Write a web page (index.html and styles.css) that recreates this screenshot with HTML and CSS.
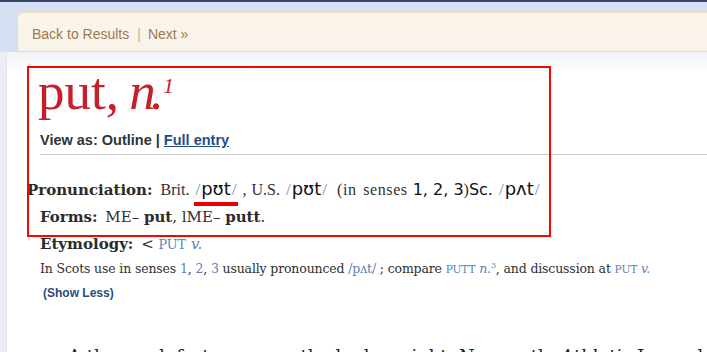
FILE: index.html
```html
<!DOCTYPE html>
<html lang="en">

<head>
    <meta charset="UTF-8">
    <title>put, n.1 — Oxford English Dictionary</title>
    <link rel="stylesheet" href="styles.css">
</head>

<body>
    <div class="top">
        <div class="crumbs">
            <a href="#">Back to Results</a><span class="sep">|</span><a href="#">Next »</a>
        </div>
    </div>
    <div class="page">
        <div class="entry">
            <h1 class="hw">put, <i>n.</i><sup>1</sup></h1>
            <div class="view">View as: Outline | <a href="#">Full entry</a></div>
            <hr class="rule">
            <p class="pron"><b>Pronunciation:</b> Brit. <span class="ipa marked"><span class="sl">/</span>pʊt<span class="sl">/</span></span> , U.S. <span class="ipa"><span class="sl">/</span>pʊt<span class="sl">/</span></span> <span class="wide">(in senses</span> <span class="sans">1, 2, 3</span>)<span class="sans">Sc.</span> <span class="ipa"><span class="sl">/</span>pʌt<span class="sl">/</span></span></p>
            <p class="line forms"><b>Forms:</b> ME– <b>put</b>, lME– <b>putt</b>.</p>
            <p class="line"><b>Etymology:</b> &lt; <span class="xref"><span class="sc">put</span> <i>v.</i></span></p>
            <p class="note">In Scots use in senses <span class="num">1</span>, <span class="num">2</span>, <span class="num">3</span> usually pronounced <span class="xipa">/pʌt/</span> ; compare <span class="xref"><span class="sc">putt</span> <i>n.</i><sup>3</sup></span>, and discussion at <span class="xref"><span class="sc">put</span> <i>v.</i></span></p>
            <a class="less" href="#">(Show Less)</a>
            <p class="quote">A thorough fortune upon the body weight. Newcastle <i>Athletic</i> Journal</p>
        </div>
        <div class="annot"></div>
    </div>
</body>

</html>
```

FILE: styles.css
```css
:root {
    --red: #c41f2b;
    --text: #2f2f2f;
    --link: #1f4d8a;
    --xref: #5d80b4;
    --brown: #9a7a4e;
}

body {
    margin: 0;
    background-color: #eceef4;
    color: var(--text);
    font-family: "DejaVu Serif", serif;
    height: 352px;
    overflow: hidden;
}

.top {
    border-top: 2px solid #34486c;
    background-color: #d7e0f3;
    padding: 10px 0 0 17px;
}

.crumbs {
    height: 40px;
    box-sizing: border-box;
    padding: 13px 0 0 14px;
    background: linear-gradient(#fdf4ea, #f8f3ea);
    border: 1px solid #efdcbd;
    border-right: none;
    border-bottom-color: #e2dacd;
    border-radius: 6px 0 0 0;
    font-family: "Liberation Sans", Arial, sans-serif;
    font-size: 14px;
}

.crumbs a {
    color: var(--brown);
    text-decoration: none;
}

.sep {
    color: #c9b08c;
    margin: 0 7px 0 8px;
}

.page {
    position: relative;
    margin-left: 6px;
    border-left: 1px solid #e1e4eb;
    background: linear-gradient(#f1f3f7, #ffffff 20px);
    height: 320px;
}

.entry {
    padding: 14px 0 0 33px;
}

.hw {
    margin: 0 0 0 -2px;
    font-family: "Liberation Serif", serif;
    font-weight: normal;
    font-size: 53px;
    line-height: 50px;
    color: var(--red);
    word-spacing: -3px;
}

.hw i {
    letter-spacing: -5px;
}

.hw sup {
    font-style: italic;
    font-size: 22px;
    vertical-align: 16px;
    line-height: 0;
    margin-left: 4px;
}

.view {
    margin-top: 16px;
    font-family: "Liberation Sans", Arial, sans-serif;
    font-weight: bold;
    font-size: 14.5px;
    line-height: 16px;
    color: #2f333a;
}

.view a {
    color: var(--link);
}

.rule {
    margin: 6px 0 0 0;
    border: none;
    border-top: 1px solid #cccccc;
}

.pron,
.line {
    margin: 0;
    font-size: 15px;
    line-height: 27px;
    height: 27px;
}

.pron b,
.line b {
    color: #2c2c2c;
}

.pron b:first-child,
.line b:first-child {
    margin-right: 3px;
}

.pron {
    margin: 20px 0 0 -13px;
    font-family: "Liberation Serif", serif;
    font-size: 16px;
    word-spacing: 1px;
}

.wide {
    letter-spacing: 0.6px;
    word-spacing: 2px;
    margin-left: 4px;
}

.forms {
    margin-top: 2px;
}

.pron b {
    font-family: "DejaVu Serif", serif;
    font-size: 15px;
    word-spacing: 0;
}

.ipa {
    position: relative;
    font-family: "DejaVu Sans", sans-serif;
    font-size: 18px;
    color: #111;
    word-spacing: 0;
}

.sl {
    font-family: "Liberation Serif", serif;
    font-size: 17px;
    color: #6f8fbd;
    margin: 0 1px;
}

.marked::after {
    content: "";
    position: absolute;
    left: 0;
    right: 0;
    bottom: -7px;
    height: 4px;
    background-color: #ee0000;
}

.sans {
    font-family: "DejaVu Sans", sans-serif;
    font-size: 16px;
    color: #111;
    word-spacing: 0;
}

.xref {
    color: var(--xref);
}

.sc {
    text-transform: uppercase;
    font-size: 0.85em;
}

.xref sup {
    font-size: 8px;
}

.note {
    margin: -5px 0 0 0;
    font-size: 12.5px;
    line-height: 25px;
    letter-spacing: -0.15px;
}

.num,
.xipa {
    color: var(--xref);
}

.less {
    display: block;
    margin: 0 0 0 3px;
    font-family: "Liberation Sans", Arial, sans-serif;
    font-weight: bold;
    font-size: 12px;
    line-height: 22px;
    color: #2b4b7d;
    text-decoration: none;
}

.quote {
    margin: 42px 0 0 28px;
    font-size: 18px;
    color: #222;
}

.annot {
    position: absolute;
    left: 20px;
    top: 14px;
    width: 520px;
    height: 167px;
    border: 2px solid #ff0000;
}
```
